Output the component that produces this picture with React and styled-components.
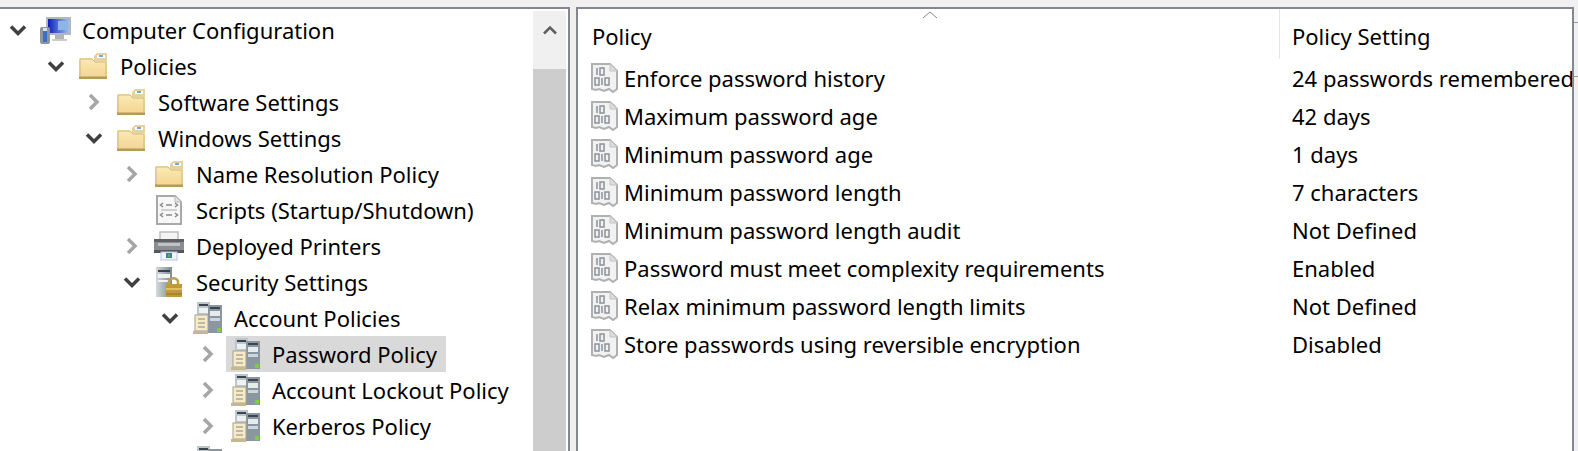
import React from 'react';
import styled, { createGlobalStyle } from 'styled-components';

const GlobalStyle = createGlobalStyle`
  html, body {
    margin: 0;
    padding: 0;
    background: #f0f0f0;
    overflow: hidden;
  }
`;

const Window = styled.div`
  display: flex;
  width: 1578px;
  height: 451px;
  padding-top: 7px;
  box-sizing: border-box;
  background: #f0f0f0;
  font-family: "Noto Sans", "Open Sans", sans-serif;
  font-size: 22px;
  color: #000;
  overflow: hidden;
`;

const TreePane = styled.div`
  display: flex;
  width: 570px;
  flex-shrink: 0;
  box-sizing: border-box;
  background: #fff;
  border-top: 2px solid #828790;
  border-right: 2px solid #828790;
  overflow: hidden;
`;

const Tree = styled.div`
  flex: 1;
  padding-top: 3px;
  overflow: hidden;
`;

const TreeRow = styled.div`
  display: flex;
  align-items: center;
  height: 36px;
  padding-left: ${(p) => p.$level * 38}px;
  white-space: nowrap;
`;

const ChevronBox = styled.span`
  display: flex;
  align-items: center;
  justify-content: center;
  width: 36px;
  height: 36px;
  flex-shrink: 0;
`;

const TreeLabel = styled.div`
  display: flex;
  align-items: center;
  height: 36px;
  padding: 0 9px 0 2px;
  background: ${(p) => (p.$selected ? '#d9d9d9' : 'transparent')};
`;

const IconSlot = styled.span`
  display: flex;
  align-items: center;
  justify-content: center;
  width: 34px;
  height: 36px;
  margin-right: 10px;
  flex-shrink: 0;

  svg {
    display: block;
  }
`;

const Scrollbar = styled.div`
  display: flex;
  flex-direction: column;
  width: 33px;
  margin: 2px 2px 0 0;
  background: #f0f0f0;
  flex-shrink: 0;
`;

const ScrollButton = styled.div`
  display: flex;
  align-items: center;
  justify-content: center;
  height: 58px;
  padding-bottom: 20px;
  box-sizing: border-box;
`;

const ScrollThumb = styled.div`
  flex: 1;
  background: #cdcdcd;
`;

const Splitter = styled.div`
  width: 6px;
  flex-shrink: 0;
`;

const ListPane = styled.div`
  position: relative;
  width: 998px;
  flex-shrink: 0;
  box-sizing: border-box;
  background: #fff;
  border-top: 2px solid #828790;
  border-left: 2px solid #828790;
  border-right: 2px solid #828790;
  overflow: hidden;
`;

const EdgeStrip = styled.div`
  position: relative;
  flex: 1;
`;

const EdgeTick = styled.span`
  position: absolute;
  left: 0;
  right: 0;
  top: ${(p) => p.$top}px;
  height: 1px;
  background: #9a9a9a;
`;

const Grid = styled.div`
  display: grid;
  grid-template-columns: 701px 1fr;
`;

const HeaderCell = styled.div`
  display: flex;
  align-items: center;
  height: 50px;
  padding: 4px 0 0 ${(p) => (p.$first ? 14 : 13)}px;
  box-sizing: border-box;
  ${(p) => (p.$first ? '' : 'box-shadow: inset 1px 0 0 #e5e5e5;')}
`;

const SortCaret = styled.svg`
  position: absolute;
  left: 344px;
  top: 2px;
`;

const NameCell = styled.div`
  display: flex;
  align-items: center;
  height: 38px;
  padding-left: 13px;
  white-space: nowrap;
`;

const ValueCell = styled.div`
  display: flex;
  align-items: center;
  height: 38px;
  padding-left: 13px;
  white-space: nowrap;
`;

const PolicyIconSlot = styled.span`
  display: flex;
  width: 28px;
  margin-right: 5px;
  flex-shrink: 0;
`;

const Chevron = ({ open }) =>
  open ? (
    <svg width="18" height="12" viewBox="0 0 18 12">
      <path d="M2 2.500 9 9.500l7-7" fill="none" stroke="#404040" strokeWidth="3.500" />
    </svg>
  ) : (
    <svg width="12" height="18" viewBox="0 0 12 18">
      <path d="M2 2l7 7-7 7" fill="none" stroke="#a6a6a6" strokeWidth="3.500" />
    </svg>
  );

const FolderIcon = () => (
  <svg width="28" height="26" viewBox="0 0 28 26">
    <defs>
      <linearGradient id="folderFill" x1="0" y1="0" x2="0" y2="1">
        <stop offset="0" stopColor="#fbeab8" />
        <stop offset="1" stopColor="#f3d48c" />
      </linearGradient>
    </defs>
    <path d="M15 3l3-3h10v8H15z" fill="#e4d2a0" />
    <rect x="18" y="2" width="8" height="3" fill="#fff" />
    <rect x="20" y="2" width="4" height="2" fill="#6fa8dc" />
    <path d="M0 5h13l3 3h12v18H0z" fill="url(#folderFill)" />
    <path d="M1 6h12l3 3h11v16H1z" fill="none" stroke="#d0b878" />
    <rect x="0" y="23.500" width="28" height="2.500" fill="#b59a5c" />
  </svg>
);

const ComputerIcon = () => (
  <svg width="32" height="28" viewBox="0 0 32 28">
    <defs>
      <linearGradient id="screenFill" x1="0" y1="0" x2="1" y2="0">
        <stop offset="0" stopColor="#0a1fc0" />
        <stop offset="1" stopColor="#9cc0ee" />
      </linearGradient>
    </defs>
    <rect x="7" y="1" width="25" height="18" fill="#b4b8bc" />
    <rect x="9" y="3" width="21" height="14" fill="url(#screenFill)" />
    <rect x="19" y="5" width="9" height="9" fill="#8fb4e6" />
    <rect x="16" y="19" width="9" height="4" fill="#b0b4b8" />
    <rect x="13" y="23" width="15" height="2" fill="#c8cccf" />
    <rect x="1" y="11" width="10" height="17" rx="2" fill="#8f959a" />
    <rect x="4" y="15" width="4" height="11" fill="#3f6fc4" />
    <rect x="4" y="12" width="4" height="3" fill="#dfe3e6" />
  </svg>
);

const ScriptIcon = () => (
  <svg width="26" height="30" viewBox="0 0 26 30">
    <path d="M1 1h18l6 6v22H1z" fill="#f7f7f7" stroke="#a8a8a8" strokeWidth="2" />
    <path d="M19 1v6h6" fill="#e4e4e4" stroke="#b8b8b8" />
    <g fill="none" stroke="#8a8a8a" strokeWidth="1.500">
      <path d="M7 8 4.500 10 7 12M19 8l2.500 2-2.500 2M10 10h6" />
      <path d="M5 15h16" stroke="#c4c4c4" />
      <path d="M7 18l-2.500 2L7 22M19 18l2.500 2-2.500 2M10 20h6" />
    </g>
  </svg>
);

const PrinterIcon = () => (
  <svg width="32" height="30" viewBox="0 0 32 30">
    <rect x="7" y="1" width="18" height="10" fill="#f4f4f4" stroke="#bdbdbd" strokeWidth="1.500" />
    <rect x="1" y="8" width="30" height="14" fill="#8b8d90" />
    <rect x="1" y="8" width="30" height="3" fill="#5e6063" />
    <rect x="5" y="12" width="22" height="3" fill="#bfc1c3" />
    <rect x="1" y="19" width="30" height="3" fill="#55575a" />
    <rect x="8" y="21" width="16" height="8" fill="#f2f6fa" stroke="#b4c4dc" />
    <rect x="13" y="22" width="6" height="5" fill="#3f7cb0" />
    <rect x="15" y="23" width="2" height="3" fill="#6aa84f" />
  </svg>
);

const LockServerIcon = () => (
  <svg width="28" height="32" viewBox="0 0 28 32">
    <defs>
      <linearGradient id="towerFill" x1="0" y1="0" x2="1" y2="0">
        <stop offset="0" stopColor="#d4dade" />
        <stop offset="1" stopColor="#7c8892" />
      </linearGradient>
    </defs>
    <rect x="1" y="1" width="16" height="30" fill="url(#towerFill)" />
    <rect x="3" y="4" width="12" height="2" fill="#39424a" />
    <rect x="3" y="8" width="12" height="4" fill="#f1f4f5" />
    <rect x="3" y="14" width="12" height="2" fill="#f1f4f5" />
    <path d="M14 18v-3a5 5 0 0 1 9 0v3" fill="none" stroke="#c0a050" strokeWidth="2.500" />
    <rect x="11" y="18" width="16" height="13" fill="#c09a3a" />
    <rect x="11" y="22" width="16" height="2" fill="#e0c060" />
    <rect x="11" y="27" width="16" height="2" fill="#a88530" />
  </svg>
);

const PolicyServerIcon = () => (
  <svg width="30" height="33" viewBox="0 0 30 33">
    <rect x="5" y="0" width="13" height="20" fill="#bcc6cb" />
    <rect x="7" y="2" width="9" height="2" fill="#3c454c" />
    <rect x="7" y="6" width="9" height="5" fill="#eef2f3" />
    <rect x="16" y="3" width="14" height="28" fill="#8a96a0" />
    <rect x="18" y="5" width="10" height="2" fill="#3c454c" />
    <rect x="18" y="9" width="10" height="5" fill="#e6ecee" />
    <rect x="18" y="16" width="10" height="3" fill="#cdd6da" />
    <rect x="25" y="26" width="4" height="4" fill="#7ccf3c" />
    <rect x="3" y="13" width="13" height="16" fill="#f8ebc4" stroke="#a3a396" />
    <path d="M6 17h7M6 21h7M6 25h7" stroke="#a8a8a8" strokeWidth="1.500" />
    <rect x="1" y="29" width="15" height="3" fill="#c4b88c" />
  </svg>
);

const BinaryDocIcon = () => (
  <svg width="28" height="30" viewBox="0 0 28 30">
    <path d="M1 1h18l7 7v18l-4 3-4-3-5 2-5-2-3 1-4-1z" fill="#f2f2f2" stroke="#b0b0b0" strokeWidth="2" />
    <path d="M19 1v7h7" fill="#dcdcdc" stroke="#c4c4c4" />
    <g fill="none" stroke="#8c929a" strokeWidth="1.500">
      <path d="M6 5v7" />
      <rect x="9" y="5" width="4" height="7" />
      <rect x="4" y="15" width="4" height="7" />
      <path d="M11 15v7" />
      <rect x="14" y="15" width="4" height="7" />
    </g>
  </svg>
);

const treeItems = [
  { level: 0, icon: ComputerIcon, label: 'Computer Configuration', open: true },
  { level: 1, icon: FolderIcon, label: 'Policies', open: true },
  { level: 2, icon: FolderIcon, label: 'Software Settings', open: false },
  { level: 2, icon: FolderIcon, label: 'Windows Settings', open: true },
  { level: 3, icon: FolderIcon, label: 'Name Resolution Policy', open: false },
  { level: 3, icon: ScriptIcon, label: 'Scripts (Startup/Shutdown)' },
  { level: 3, icon: PrinterIcon, label: 'Deployed Printers', open: false },
  { level: 3, icon: LockServerIcon, label: 'Security Settings', open: true },
  { level: 4, icon: PolicyServerIcon, label: 'Account Policies', open: true },
  { level: 5, icon: PolicyServerIcon, label: 'Password Policy', open: false, selected: true },
  { level: 5, icon: PolicyServerIcon, label: 'Account Lockout Policy', open: false },
  { level: 5, icon: PolicyServerIcon, label: 'Kerberos Policy', open: false },
  { level: 4, icon: PolicyServerIcon, label: '' },
];

const policies = [
  ['Enforce password history', '24 passwords remembered'],
  ['Maximum password age', '42 days'],
  ['Minimum password age', '1 days'],
  ['Minimum password length', '7 characters'],
  ['Minimum password length audit', 'Not Defined'],
  ['Password must meet complexity requirements', 'Enabled'],
  ['Relax minimum password length limits', 'Not Defined'],
  ['Store passwords using reversible encryption', 'Disabled'],
];

export default function App() {
  return (
    <Window>
      <GlobalStyle />
      <TreePane>
        <Tree>
          {treeItems.map((item) => {
            const Icon = item.icon;
            return (
              <TreeRow key={item.label} $level={item.level}>
                <ChevronBox>{item.open !== undefined && <Chevron open={item.open} />}</ChevronBox>
                <TreeLabel $selected={item.selected}>
                  <IconSlot>
                    <Icon />
                  </IconSlot>
                  {item.label}
                </TreeLabel>
              </TreeRow>
            );
          })}
        </Tree>
        <Scrollbar>
          <ScrollButton>
            <svg width="16" height="10" viewBox="0 0 16 10">
              <path d="M2 8.500 8 2.500l6 6" fill="none" stroke="#606060" strokeWidth="2.500" />
            </svg>
          </ScrollButton>
          <ScrollThumb />
        </Scrollbar>
      </TreePane>
      <Splitter />
      <ListPane>
        <SortCaret width="16" height="8" viewBox="0 0 16 8">
          <path d="M1 7l7-6 7 6" fill="none" stroke="#8a8a8a" strokeWidth="1" />
        </SortCaret>
        <Grid>
          <HeaderCell $first>Policy</HeaderCell>
          <HeaderCell>Policy Setting</HeaderCell>
          {policies.map(([name, value]) => (
            <React.Fragment key={name}>
              <NameCell>
                <PolicyIconSlot>
                  <BinaryDocIcon />
                </PolicyIconSlot>
                {name}
              </NameCell>
              <ValueCell>{value}</ValueCell>
            </React.Fragment>
          ))}
        </Grid>
      </ListPane>
      <EdgeStrip>
        <EdgeTick $top={15} />
        <EdgeTick $top={69} />
      </EdgeStrip>
    </Window>
  );
}
